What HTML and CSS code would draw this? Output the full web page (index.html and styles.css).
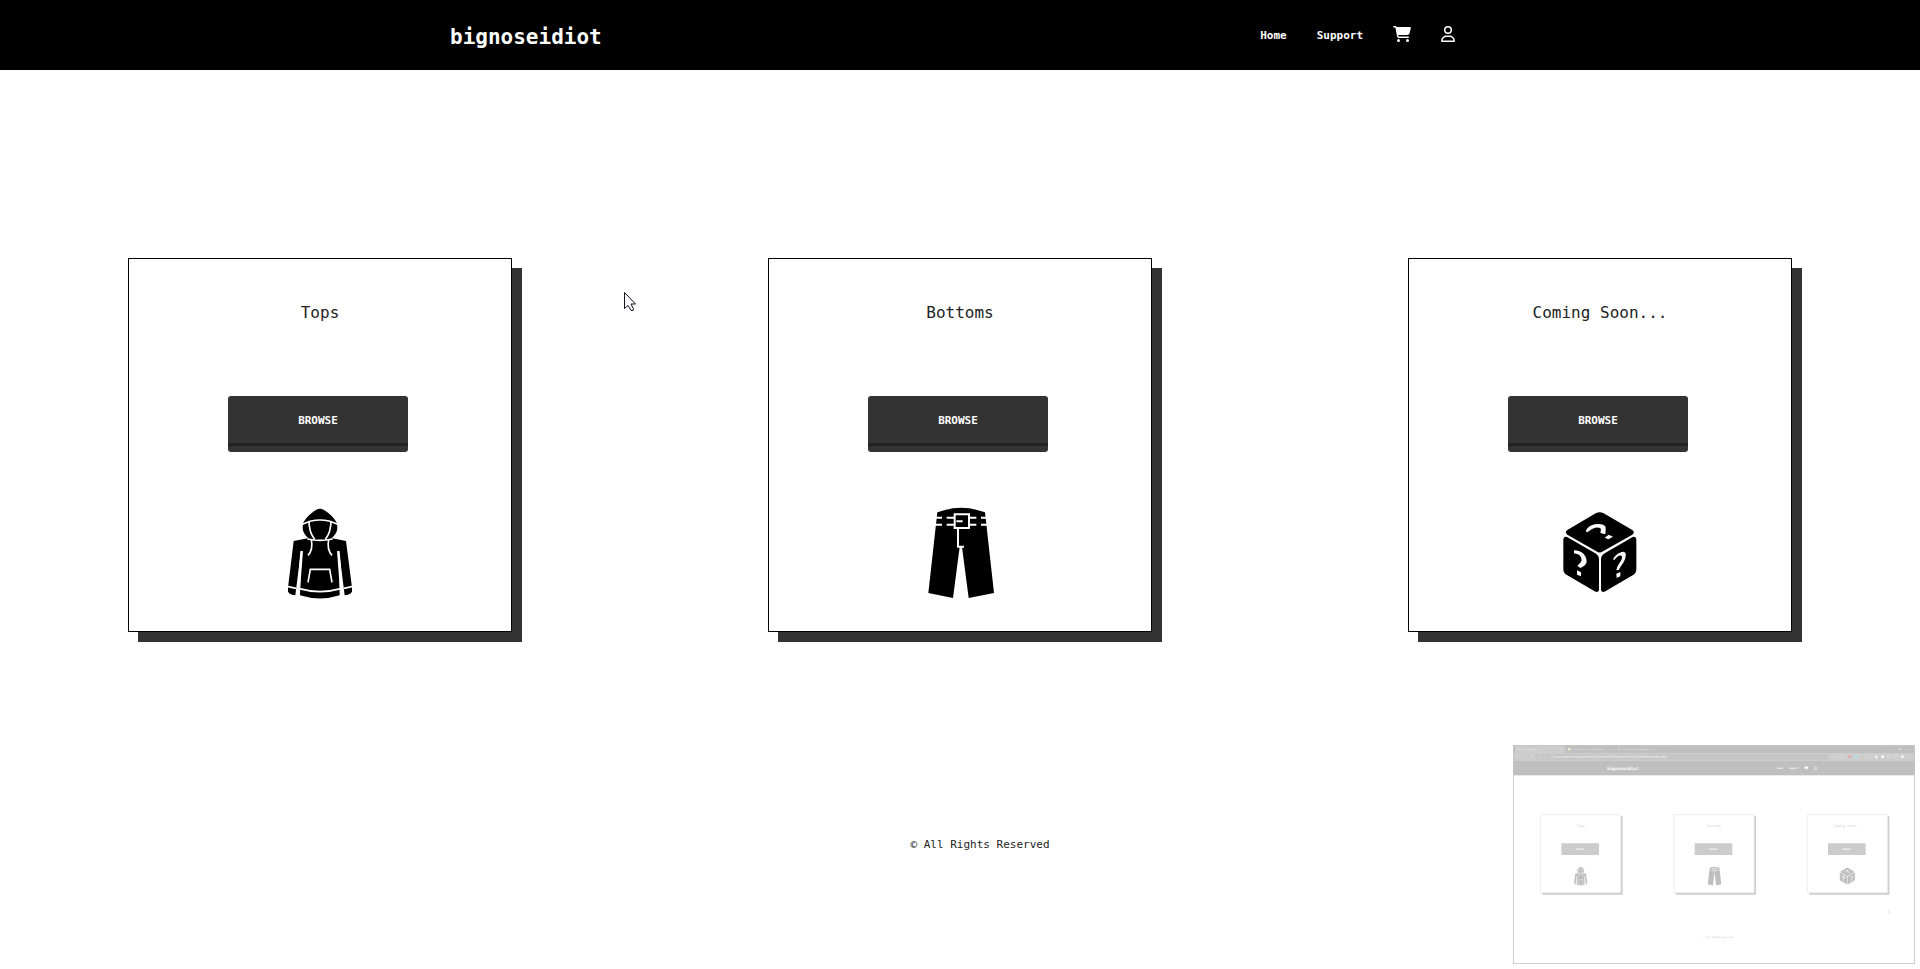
FILE: index.html
```html
<!DOCTYPE html>
<html lang="en">
<head>
<meta charset="utf-8">
<meta name="viewport" content="width=device-width, initial-scale=1">
<title>Clothing Store</title>
<link rel="stylesheet" href="styles.css">
</head>
<body>
<svg class="sprite" aria-hidden="true">
  <symbol id="hoodie" viewBox="0 0 300 330">
    <path fill="currentColor" d="M150 29C158 29 166 34 174 41C187 51 196 62 201 73C202 82 203 92 199 100C195 109 188 116 180 121L176 122C165 124 135 124 124 122L120 121C112 116 105 109 101 100C97 92 98 82 99 73C104 62 113 51 126 41C134 34 142 29 150 29Z"/>
    <path fill="currentColor" d="M71 126L117 117Q150 129 183 117L228 126L246 266V278Q240 288 224 289L207 155L209 289Q150 308 90 289L93 155L76 289Q60 288 54 278V266Z"/>
    <g class="cut">
      <path d="M97 76Q150 50 203 76M117 65Q117 100 134 121M183 65Q183 100 166 121M112 120Q150 128 188 120"/>
      <path d="M124 122Q130 152 114 169M176 122Q170 152 186 169M114 250L121 211H179L186 250"/>
      <path d="M51 262L78 268M222 268L249 262M88 269Q150 287 212 269"/>
      <path class="gap" d="M95 156L84 300M205 156L216 300"/>
    </g>
  </symbol>
  <symbol id="pants" viewBox="90 30 300 330">
    <path fill="currentColor" d="M172 70Q243 43 315 70L342 312L266 327L246 174H239L219 327L145 312Z"/>
    <g class="cut">
      <path class="belt" d="M160 86H186M200 86H223M267 86H289M303 86H325M160 107H186M200 107H223M267 107H289M303 107H325M229 97H248M234 118V173H252"/>
      <path class="belt" d="M224 76H267V117H224Z"/>
    </g>
  </symbol>
  <symbol id="cube" viewBox="150 30 300 330">
    <g fill="currentColor">
      <path d="M202 123L287 73Q299 67 311 73L397 123Q406 130 397 137L309 187Q299 194 289 187L202 137Q193 130 202 123Z"/>
      <path d="M190 151Q191 140 201 144L286 193Q297 200 297 211V304Q294 312 284 307L202 259Q190 253 190 241Z"/>
      <path d="M409 151Q408 140 398 144L314 193Q303 200 303 211V304Q306 312 316 307L398 259Q409 253 409 241Z"/>
    </g>
    <g fill="#fff">
      <path d="M257 126Q265 110 284 106Q307 102 316 112Q318 116 316 136L301 132Q305 123 301 117Q285 110 262 130ZM326 137L339 143L325 151L314 146Z"/>
      <path d="M222 184Q238 184 249 193Q260 204 260 218Q258 230 241 237L232 230Q243 222 245 214Q244 195 222 193ZM231 244L243 250V262L231 257Z"/>
      <path d="M339 211Q346 196 360 191Q373 185 377 193Q379 205 370 221Q361 232 356 243L349 244Q351 232 359 221Q369 208 365 200Q355 196 343 213ZM349 254L361 249V262L350 267Z"/>
    </g>
  </symbol>
  <symbol id="cart" viewBox="0 0 576 512">
    <path fill="currentColor" d="M0 24C0 10.700 10.700 0 24 0H69.500c22 0 41.500 12.800 50.600 32h411c26.300 0 45.500 25 38.600 50.400l-41 152.300c-8.500 31.400-37 53.300-69.500 53.300H170.700l5.400 28.500c2.200 11.300 12.100 19.500 23.600 19.500H488c13.300 0 24 10.700 24 24s-10.700 24-24 24H199.700c-34.600 0-64.300-24.600-70.700-58.500L77.400 54.500c-.7-3.800-4-6.500-7.900-6.500H24C10.700 48 0 37.300 0 24zM128 464a48 48 0 1 1 96 0 48 48 0 1 1 -96 0zm336-48a48 48 0 1 1 0 96 48 48 0 1 1 0-96z"/>
  </symbol>
  <symbol id="user" viewBox="0 0 448 512">
    <path fill="currentColor" d="M304 128a80 80 0 1 0 -160 0 80 80 0 1 0 160 0zM96 128a128 128 0 1 1 256 0A128 128 0 1 1 96 128zM49.300 464H398.700c-8.900-63.300-63.300-112-129-112H178.300c-65.700 0-120.100 48.700-129 112zM0 482.300C0 383.800 79.800 304 178.300 304h91.400C368.200 304 448 383.800 448 482.300c0 16.400-13.300 29.700-29.700 29.700H29.700C13.300 512 0 498.700 0 482.300z"/>
  </symbol>
</svg>

<header class="site-header">
  <div class="header-inner">
    <a class="brand" href="#">bignoseidiot</a>
    <nav class="nav">
      <a href="#">Home</a>
      <a href="#">Support</a>
      <a href="#" aria-label="Cart"><svg class="nav-icon" width="18" height="16"><use href="#cart"/></svg></a>
      <a href="#" aria-label="Account"><svg class="nav-icon" width="14" height="16"><use href="#user"/></svg></a>
    </nav>
  </div>
</header>

<main class="cards">
  <section class="card">
    <h2>Tops</h2>
    <button class="browse" type="button">BROWSE</button>
    <svg class="picture" role="img" aria-label="Hoodie"><use href="#hoodie"/></svg>
  </section>
  <section class="card">
    <h2>Bottoms</h2>
    <button class="browse" type="button">BROWSE</button>
    <svg class="picture" role="img" aria-label="Trousers"><use href="#pants"/></svg>
  </section>
  <section class="card">
    <h2>Coming Soon...</h2>
    <button class="browse" type="button">BROWSE</button>
    <svg class="picture" role="img" aria-label="Mystery box"><use href="#cube"/></svg>
  </section>
</main>

<footer class="site-footer">© All Rights Reserved</footer>

<svg class="pointer" viewBox="0 0 12 20" aria-hidden="true">
  <path d="M.5 .5V16.500L4 13.500L7 18.500H9L9.500 17L7 12H11.500Z" fill="#fff" stroke="#101020"/>
</svg>

<svg class="preview" viewBox="24 30 1206 657" role="img" aria-label="Window preview">
  <rect x="24" y="30" width="1206" height="657" fill="#fff"/>
  <rect x="24" y="30" width="1206" height="24" fill="#bfbfbf"/>
  <rect x="30" y="33" width="150" height="22" rx="4" fill="#cdcdcd"/>
  <rect x="24" y="54" width="1206" height="24" fill="#cdcdcd"/>
  <rect x="92" y="57" width="878" height="17" rx="8" fill="#c5c5c5"/>
  <rect x="24" y="78" width="1206" height="43" fill="#bfbfbf"/>
  <g class="chrome-text">
    <text x="55" y="46">Clothing Store</text>
    <text x="168" y="46">×</text>
    <text x="203" y="46">How to add an event listener to</text>
    <text x="319" y="46">×</text>
    <text x="353" y="46">Document.querySelector() - We</text>
    <text x="467" y="46">×</text>
    <text x="491" y="46">+</text>
    <text x="114" y="68">File |</text>
    <text class="address" x="138" y="68">C:/Users/simon/Coding/Clothing%20Store%20Website/Clothing%20Website/index.html</text>
  </g>
  <g class="chrome-lines">
    <circle cx="44" cy="43" r="4"/><path d="M332 38V48M36 65H45M40 61L36 65L40 69M58 65H67M63 61L67 65L63 69"/>
    <circle cx="81" cy="65" r="4"/><circle cx="104" cy="65" r="4"/><rect x="340" y="39" width="7" height="8"/>
    <path d="M1124 41L1127 44L1130 41M1153 43H1159M1210 40L1216 46M1216 40L1210 46"/><rect x="1182" y="40" width="5" height="5"/>
    <circle cx="988" cy="65" r="3"/><circle cx="1008" cy="65" r="4"/><circle cx="1093" cy="65" r="4"/><rect x="1169" y="61" width="8" height="8"/><path d="M1148 62V68L1153 63L1158 68V62M1214 61V69"/>
  </g>
  <rect x="189" y="39" width="8" height="8" fill="#eee3c8"/>
  <rect x="1030" y="61" width="7" height="8" fill="#eda6a6"/>
  <circle cx="1053" cy="65" r="5" fill="#a9e4e4"/>
  <path d="M1069 68H1077" stroke="#d8c890" stroke-width="3"/>
  <path d="M1110 62L1120 72" stroke="#f4f4f4" stroke-width="5"/>
  <path d="M1120 68V74" stroke="#9fc79f" stroke-width="3"/>
  <rect x="1129" y="61" width="8" height="8" fill="#f6f6f6"/>
  <circle cx="1192" cy="65" r="5" fill="#f1f1f1"/>
  <text class="mini-brand" x="307" y="106">bignoseidiot</text>
  <text class="mini-nav" x="816" y="102">Home</text>
  <text class="mini-nav" x="851" y="102">Support</text>
  <use href="#cart" x="897" y="94" width="13" height="11" color="#fff"/>
  <use href="#user" x="927" y="94" width="10" height="11" color="#fff"/>
  <g class="mini-card">
    <path class="shade" d="M112 244H353V479H112Z"/><path class="face" d="M107 239H347V473H107Z"/>
    <path class="shade" d="M512 244H753V479H512Z"/><path class="face" d="M507 239H747V473H507Z"/>
    <path class="shade" d="M912 244H1153V479H912Z"/><path class="face" d="M907 239H1147V473H907Z"/>
    <path class="shade" d="M169 325H282V360H169ZM569 325H682V360H569ZM969 325H1082V360H969Z"/>
  </g>
  <g class="mini-title">
    <text x="227" y="276">Tops</text><text x="627" y="276">Bottoms</text><text x="1027" y="276">Coming Soon...</text>
  </g>
  <g class="mini-browse">
    <text x="225" y="344">BROWSE</text><text x="625" y="344">BROWSE</text><text x="1025" y="344">BROWSE</text>
  </g>
  <g color="#bfbfbf">
    <use href="#hoodie" x="196" y="390" width="62" height="68"/>
    <use href="#pants" x="597" y="390" width="62" height="68"/>
    <use href="#cube" x="996" y="390" width="62" height="68"/>
  </g>
  <text class="mini-footer" x="640" y="610">© All Rights Reserved</text>
  <path d="M1150 525V536L1153 534L1155 537L1157 533Z" fill="#fff" stroke="#ccc"/>
  <rect x="25" y="31" width="1204" height="655" fill="none" stroke="#c6c6c6" stroke-width="3"/>
</svg>
</body>
</html>
```

FILE: styles.css
```css
* {
  box-sizing: border-box;
}

body {
  position: relative;
  min-height: 100vh;
  margin: 0;
  background: #fff;
  color: #222;
  font-family: "DejaVu Sans Mono", monospace;
  font-size: 11px;
}

.sprite {
  position: absolute;
  width: 0;
  height: 0;
}

.site-header {
  background: #000;
  padding: 0 24px;
}

.header-inner {
  display: flex;
  align-items: center;
  justify-content: space-between;
  max-width: 1020px;
  min-height: 70px;
  margin: 0 auto;
  padding-right: 15px;
}

.site-header a {
  color: #fff;
  text-decoration: none;
}

.brand {
  padding-top: 4px;
  font-size: 21px;
  font-weight: bold;
  line-height: 26px;
}

.nav {
  display: flex;
  align-items: center;
  gap: 30px;
  font-weight: bold;
}

.nav-icon {
  display: block;
  margin-bottom: 2px;
}

.cards {
  display: grid;
  grid-template-columns: repeat(3, 1fr);
  padding-top: 188px;
}

.card {
  display: flex;
  flex-direction: column;
  align-items: center;
  width: 60%;
  margin: 0 auto;
  padding: 42px 0 22px;
  border: 1px solid #000;
  background: #fff;
  box-shadow: 10px 10px #333;
}

.card h2 {
  margin: 0 0 71px;
  font-size: 16px;
  font-weight: normal;
  line-height: 24px;
}

.browse {
  width: 180px;
  height: 56px;
  margin: 0 4px 47px 0;
  padding: 0 0 8px;
  border: 0;
  border-radius: 3px;
  background: linear-gradient(#333 47px, #222 47px, #222 50px, #333 50px);
  color: #fff;
  font: bold 11px "DejaVu Sans Mono", monospace;
}

.picture {
  display: block;
  width: 100px;
  height: 110px;
  color: #000;
}

.cut {
  fill: none;
  stroke: #fff;
  stroke-width: 5px;
}

.cut .gap {
  stroke-width: 8px;
}

.cut .belt {
  stroke-width: 6px;
}

.site-footer {
  padding: 205px 0 24px 40px;
  line-height: 16px;
  text-align: center;
}

.pointer {
  position: absolute;
  top: 292px;
  left: 624px;
  width: 12px;
  height: 20px;
}

.preview {
  position: absolute;
  right: 5px;
  bottom: 5px;
  width: 402px;
  height: 219px;
}

.chrome-text {
  fill: #f0f0f0;
  font: 7px "Liberation Sans", sans-serif;
}

.chrome-text .address {
  font-size: 9px;
}

.chrome-lines {
  fill: none;
  stroke: #e4e4e4;
  stroke-width: 1px;
}

.mini-brand {
  fill: #fff;
  font-size: 13px;
  font-weight: bold;
}

.mini-nav {
  fill: #fff;
  font-size: 7px;
  font-weight: bold;
}

.mini-card .shade {
  fill: #ccc;
}

.mini-card .face {
  fill: #fff;
  stroke: #eee;
  stroke-width: 3px;
}

.mini-title {
  fill: #ccc;
  font-size: 10px;
  text-anchor: middle;
}

.mini-browse {
  fill: #fff;
  font-size: 7px;
  font-weight: bold;
  text-anchor: middle;
}

.mini-footer {
  fill: #ccc;
  font-size: 7px;
  text-anchor: middle;
}
```
